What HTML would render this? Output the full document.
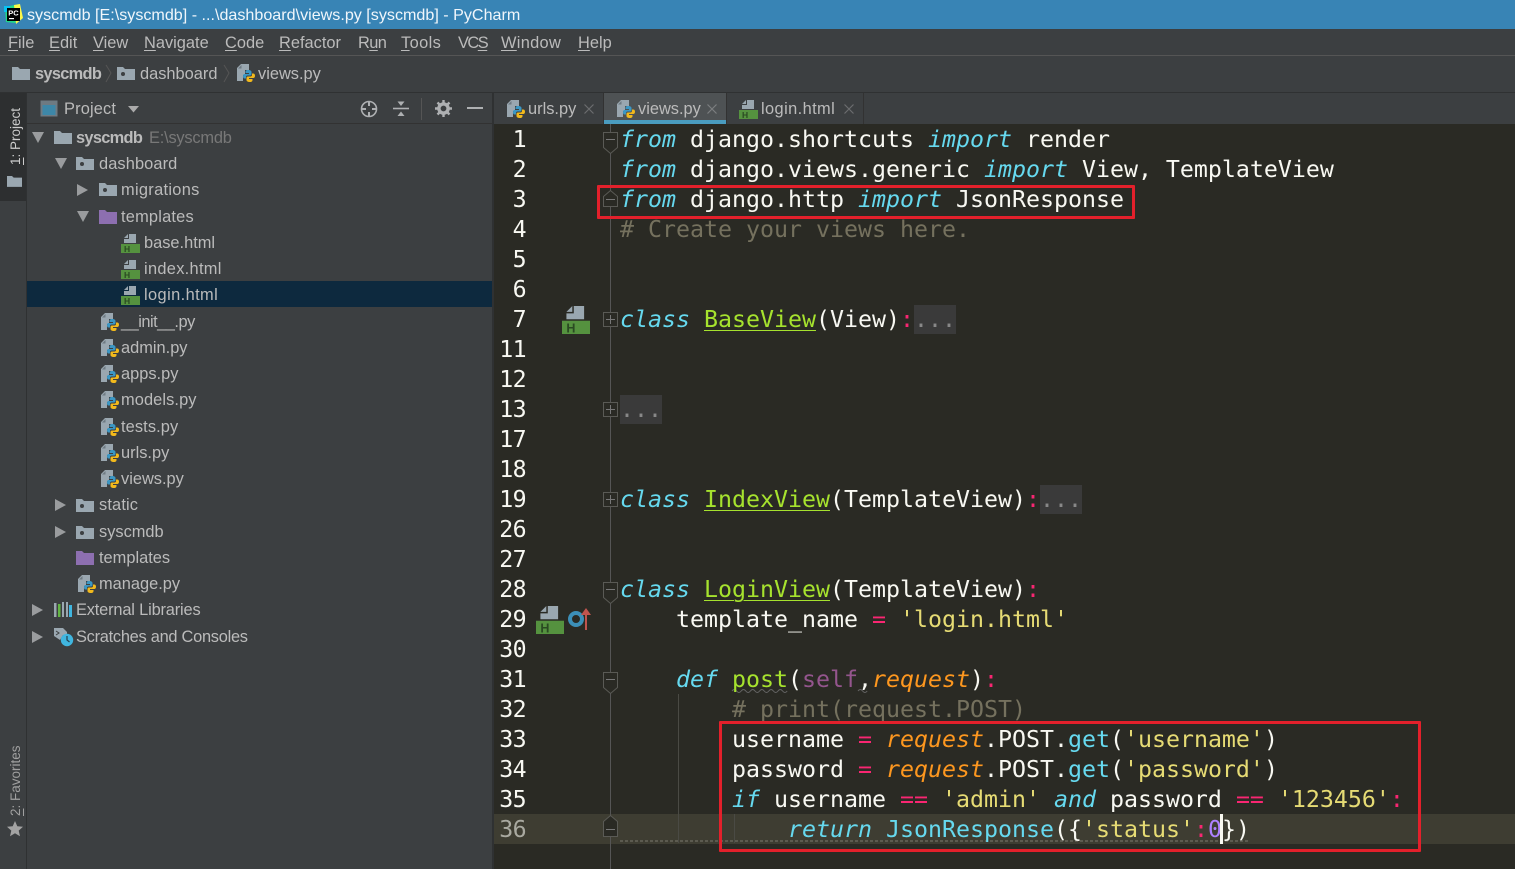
<!DOCTYPE html>
<html><head><meta charset="utf-8"><title>PyCharm</title>
<style>
html,body{margin:0;padding:0;width:1515px;height:869px;overflow:hidden;background:#3c3f41}
body{position:relative;font-family:"Liberation Sans",sans-serif;color:#bbb;font-size:16.4px}
.a{position:absolute}
.t{position:absolute;white-space:pre;line-height:20px;height:20px}
.m u{text-underline-offset:2px}
#code,#nums{position:absolute;margin:0;font-family:"DejaVu Sans Mono","Liberation Mono",monospace;font-size:23.25px;line-height:30px;color:#f8f8f2;white-space:pre}
#code{left:620px;top:125px}
#nums{left:495px;top:125px;width:31px;text-align:right;letter-spacing:-.6px}
i{font-style:italic}
.k{color:#66d9ef;font-style:italic}.s{color:#e6db74}.o{color:#f92672}.c{color:#a6e22e;text-decoration:underline;text-decoration-thickness:1px;text-underline-offset:3px}
.f{color:#a6e22e}.b{color:#66d9ef}.g{color:#75715e}.r{color:#fd971f;font-style:italic}.e{color:#94558d}.n{color:#ae81ff}
.ph{position:absolute;width:42px;height:29px;background:#3a3a3a;color:#888;font:23.25px/30px "DejaVu Sans Mono",monospace;white-space:pre}
.box{position:absolute;border:3px solid #e3202b;box-sizing:border-box;border-radius:1px}
svg{position:absolute;overflow:visible}
</style></head><body>
<svg width="0" height="0" style="position:absolute">
<defs>
<symbol id="py" viewBox="0 0 18 18" overflow="visible"><path d="M4 0h8v6H8v5H6v6H0V4z" fill="#9aa7b0"/><path d="M1 4.500h3.500V1z" fill="#6e7a82"/>
<path id="pyb" d="M11 6C9 6 8.500 7 8.500 8V9H12V10H7.500C6.500 10 6 11 6 12.200S6.500 14.500 7.500 14.500H9V13C9 12 9.800 11.500 10.500 11.500H13C14 11.500 14.500 11 14.500 10V8C14.500 7 13.500 6 11 6z" fill="#3b97c4"/>
<path d="M11 6C9 6 8.500 7 8.500 8V9H12V10H7.500C6.500 10 6 11 6 12.200S6.500 14.500 7.500 14.500H9V13C9 12 9.800 11.500 10.500 11.500H13C14 11.500 14.500 11 14.500 10V8C14.500 7 13.500 6 11 6z" fill="#f2b91c" transform="rotate(180 12 12)"/></symbol>
<symbol id="ht" viewBox="0 0 19 19" overflow="visible"><path d="M8 0h7v9H3V5h5z" fill="#9aa7b0"/><path d="M3 4L7 0V4z" fill="#9aa7b0"/><rect x="0" y="10" width="19" height="9" fill="#55923f"/><text x="3" y="18" font-family="Liberation Sans" font-size="8.500" font-weight="bold" fill="#2a4a22">H</text></symbol>
<symbol id="fo" viewBox="0 0 18 14" overflow="visible"><path d="M0 1h6l2 2h10v11H0z" fill="#9aa7b0"/></symbol>
<symbol id="pk" viewBox="0 0 18 14" overflow="visible"><path d="M0 1h6l2 2h10v11H0z" fill="#9aa7b0"/><circle cx="6" cy="8" r="2" fill="#3c3f41"/></symbol>
<symbol id="pu" viewBox="0 0 18 14" overflow="visible"><path d="M0 0h6l2 2h10v12H0z" fill="#8d6fb0"/></symbol>
</defs></svg>

<!-- title -->
<div class="a" style="left:0;top:0;width:1515px;height:29px;background:#3884b5"></div>
<svg style="left:3px;top:4px" width="20" height="20"><path d="M2 3L16 0l3 13-7 6-9-1z" fill="#21d789"/><path d="M11 1l6-1 3 14-7 6z" fill="#fcf84a"/><path d="M1 2h6v6H1z" fill="#07c3f2"/><rect x="4" y="4" width="13" height="13" fill="#000"/><rect x="6" y="14" width="5" height="1.200" fill="#fff"/><text x="5.200" y="11.500" font-family="Liberation Sans" font-weight="bold" font-size="7.500" fill="#fff">PC</text></svg>
<div class="t" style="left:27px;top:5px;color:#f0f6fb;font-size:16.120px">syscmdb [E:\syscmdb] - ...\dashboard\views.py [syscmdb] - PyCharm</div>

<!-- menu -->
<div class="a" style="left:0;top:55px;width:1515px;height:1px;background:#555"></div>
<div class="m">
<div class="t" style="left:8px;top:33px"><u>F</u>ile</div>
<div class="t" style="left:49px;top:33px"><u>E</u>dit</div>
<div class="t" style="left:93px;top:33px"><u>V</u>iew</div>
<div class="t" style="left:144px;top:33px"><u>N</u>avigate</div>
<div class="t" style="left:225px;top:33px"><u>C</u>ode</div>
<div class="t" style="left:279px;top:33px"><u>R</u>efactor</div>
<div class="t" style="left:358px;top:33px;letter-spacing:-.6px">R<u>u</u>n</div>
<div class="t" style="left:401px;top:33px;letter-spacing:.4px"><u>T</u>ools</div>
<div class="t" style="left:458px;top:33px;letter-spacing:-1.5px">VC<u>S</u></div>
<div class="t" style="left:501px;top:33px;letter-spacing:.3px"><u>W</u>indow</div>
<div class="t" style="left:578px;top:33px"><u>H</u>elp</div>
</div>

<!-- breadcrumb -->
<svg style="left:12px;top:66px" width="18" height="14"><use href="#fo" width="18" height="14"/></svg>
<div class="t" style="left:35px;top:64px;font-weight:bold;letter-spacing:-.7px">syscmdb</div>
<svg style="left:105px;top:64px" width="8" height="20"><path d="M1 1l5 8-5 9" fill="none" stroke="#555"/></svg>
<svg style="left:117px;top:66px" width="18" height="14"><use href="#pk" width="18" height="14"/></svg>
<div class="t" style="left:140px;top:64px">dashboard</div>
<svg style="left:223px;top:64px" width="8" height="20"><path d="M1 1l5 8-5 9" fill="none" stroke="#555"/></svg>
<svg style="left:237px;top:64px" width="18" height="18"><use href="#py" width="18" height="18"/></svg>
<div class="t" style="left:258px;top:64px">views.py</div>

<div class="a" style="left:0;top:92px;width:1515px;height:1px;background:#2f3132"></div>

<!-- left strip -->
<div class="a" style="left:0;top:93px;width:26px;height:108px;background:#2d2f30"></div>
<div class="a" style="left:26px;top:93px;width:1px;height:776px;background:#2f3132"></div>
<div class="a" style="left:7px;top:105px;width:18px;height:60px;writing-mode:vertical-rl;transform:rotate(180deg);font-size:13.500px;line-height:18px;white-space:pre;color:#ccc"><u>1</u>: Project</div>
<svg style="left:7px;top:175px" width="15" height="12"><use href="#fo" width="15" height="12"/></svg>
<div class="a" style="left:7px;top:744px;width:18px;height:72px;writing-mode:vertical-rl;transform:rotate(180deg);font-size:13.500px;line-height:18px;white-space:pre;color:#a0a0a0"><u>2</u>: Favorites</div>
<svg style="left:7px;top:821px" width="16" height="16"><path d="M8 0l2.300 5.300 5.700.500-4.300 3.800 1.300 5.600L8 12.300 3 15.200l1.300-5.600L0 5.800l5.700-.500z" fill="#a3a3a3"/></svg>

<!-- project header -->
<svg style="left:40px;top:100px" width="18" height="17"><rect x=".5" y=".5" width="17" height="16" fill="#6e7a82"/><rect x="2.500" y="5" width="13" height="10" fill="#3d87a8"/></svg>
<div class="t" style="left:64px;top:99px;letter-spacing:.15px">Project</div>
<svg style="left:128px;top:106px" width="11" height="7"><path d="M0 0h11L5.500 6.500z" fill="#aaa"/></svg>
<svg style="left:360px;top:100px" width="18" height="18"><circle cx="9" cy="9" r="7.500" fill="none" stroke="#aeb0b2" stroke-width="1.600"/><path d="M9 1v5M9 12v5M1 9h5M12 9h5" stroke="#aeb0b2" stroke-width="2"/></svg>
<svg style="left:393px;top:100px" width="16" height="18"><path d="M0 8.500h16" stroke="#aeb0b2" stroke-width="1.600"/><path d="M4.500 1.500h7L8 6zM4.500 16h7L8 11.500z" fill="#aeb0b2"/></svg>
<div class="a" style="left:421px;top:98px;width:1px;height:22px;background:#555"></div>
<svg style="left:435px;top:100px" width="17" height="17"><circle cx="8.500" cy="8.500" r="4.600" fill="none" stroke="#aeb0b2" stroke-width="3.400"/><path d="M8.500 0v17M0 8.500h17M2.500 2.500l12 12M14.500 2.500l-12 12" stroke="#aeb0b2" stroke-width="2.400" stroke-dasharray="3 11 3 0"/></svg>
<div class="a" style="left:467px;top:107px;width:16px;height:2px;background:#aeb0b2"></div>
<div class="a" style="left:27px;top:123px;width:465px;height:1px;background:#323232"></div>

<!-- tree -->
<div class="a" style="left:27px;top:281px;width:465px;height:26px;background:#0d293e"></div>
<svg style="left:0;top:0" width="500" height="660">
<g fill="#9a9c9e">
<path d="M32 132h12l-6 11z"/><path d="M55 158h12l-6 11z"/><path d="M77 184l11 6-11 6z"/><path d="M77 211h12l-6 11z"/>
<path d="M55 499l11 6-11 6z"/><path d="M55 526l11 6-11 6z"/><path d="M32 604l11 6-11 6z"/><path d="M32 631l11 6-11 6z"/>
</g>
<use href="#fo" x="54" y="130" width="18" height="14"/>
<use href="#pk" x="76" y="156" width="18" height="14"/>
<use href="#pk" x="99" y="182" width="18" height="14"/>
<use href="#pu" x="99" y="210" width="18" height="14"/>
<use href="#ht" x="121" y="234" width="19" height="19"/>
<use href="#ht" x="121" y="260" width="19" height="19"/>
<use href="#ht" x="121" y="286" width="19" height="19"/>
<use href="#py" x="101" y="313" width="18" height="18"/>
<use href="#py" x="101" y="339" width="18" height="18"/>
<use href="#py" x="101" y="365" width="18" height="18"/>
<use href="#py" x="101" y="391" width="18" height="18"/>
<use href="#py" x="101" y="418" width="18" height="18"/>
<use href="#py" x="101" y="444" width="18" height="18"/>
<use href="#py" x="101" y="470" width="18" height="18"/>
<use href="#pk" x="76" y="498" width="18" height="14"/>
<use href="#pk" x="76" y="525" width="18" height="14"/>
<use href="#pu" x="76" y="551" width="18" height="14"/>
<use href="#py" x="78" y="575" width="18" height="18"/>
<g fill="#9aa7b0"><rect x="54" y="603" width="2.500" height="14"/><rect x="66" y="602" width="2" height="15"/></g>
<rect x="58" y="604" width="2.500" height="13" fill="#62b543"/><rect x="62" y="602" width="2" height="15" fill="#9aa7b0"/><rect x="69" y="605" width="3" height="12" fill="#40b6e0"/>
<path d="M54 628h9l4 4v3h-4l-3 5-6-4z" fill="#9aa7b0"/><path d="M56 631l3 2-3 2" stroke="#3c3f41" fill="none"/>
<circle cx="67" cy="640" r="6.200" fill="#40b6e0"/><path d="M67 636v4l2.500 2" stroke="#23404f" fill="none" stroke-width="1.200"/>
</svg>
<div class="t" style="left:76px;top:128px;font-weight:bold;letter-spacing:-.7px">syscmdb</div>
<div class="t" style="left:149px;top:128px;color:#787878;letter-spacing:-.2px">E:\syscmdb</div>
<div class="t" style="left:99px;top:154px;letter-spacing:.1px">dashboard</div>
<div class="t" style="left:121px;top:180px;letter-spacing:.3px">migrations</div>
<div class="t" style="left:121px;top:207px;letter-spacing:.2px">templates</div>
<div class="t" style="left:144px;top:233px">base.html</div>
<div class="t" style="left:144px;top:259px;letter-spacing:.3px">index.html</div>
<div class="t" style="left:144px;top:285px;letter-spacing:.4px">login.html</div>
<div class="t" style="left:121px;top:312px;letter-spacing:-.5px">__init__.py</div>
<div class="t" style="left:121px;top:338px">admin.py</div>
<div class="t" style="left:121px;top:364px">apps.py</div>
<div class="t" style="left:121px;top:390px;letter-spacing:.1px">models.py</div>
<div class="t" style="left:121px;top:417px;letter-spacing:.1px">tests.py</div>
<div class="t" style="left:121px;top:443px">urls.py</div>
<div class="t" style="left:121px;top:469px">views.py</div>
<div class="t" style="left:99px;top:495px;letter-spacing:.15px">static</div>
<div class="t" style="left:99px;top:522px">syscmdb</div>
<div class="t" style="left:99px;top:548px">templates</div>
<div class="t" style="left:99px;top:574px">manage.py</div>
<div class="t" style="left:76px;top:600px;letter-spacing:-.17px">External Libraries</div>
<div class="t" style="left:76px;top:627px;letter-spacing:-.27px">Scratches and Consoles</div>

<!-- divider -->
<div class="a" style="left:492px;top:93px;width:2px;height:776px;background:#2f3132"></div>

<!-- tabs -->
<div class="a" style="left:604px;top:93px;width:122px;height:31px;background:#4e5254"></div>
<div class="a" style="left:604px;top:120px;width:122px;height:4px;background:#4a9cbf"></div>
<div class="a" style="left:603px;top:93px;width:1px;height:31px;background:#323232"></div>
<div class="a" style="left:726px;top:93px;width:1px;height:31px;background:#323232"></div>
<div class="a" style="left:863px;top:93px;width:1px;height:31px;background:#323232"></div>
<svg style="left:507px;top:100px" width="18" height="18"><use href="#py" width="18" height="18"/></svg>
<div class="t" style="left:528px;top:99px">urls.py</div>
<svg style="left:584px;top:104px" width="10" height="10"><path d="M.5.5l9 9M9.500.5l-9 9" stroke="#6b6d6f" stroke-width="1.200"/></svg>
<svg style="left:617px;top:100px" width="18" height="18"><use href="#py" width="18" height="18"/></svg>
<div class="t" style="left:638px;top:99px">views.py</div>
<svg style="left:707px;top:104px" width="10" height="10"><path d="M.5.5l9 9M9.500.5l-9 9" stroke="#7c7e80" stroke-width="1.200"/></svg>
<svg style="left:739px;top:100px" width="19" height="19"><use href="#ht" width="19" height="19"/></svg>
<div class="t" style="left:761px;top:99px;letter-spacing:.4px">login.html</div>
<svg style="left:844px;top:104px" width="10" height="10"><path d="M.5.5l9 9M9.500.5l-9 9" stroke="#6b6d6f" stroke-width="1.200"/></svg>

<!-- editor -->
<div class="a" style="left:494px;top:124px;width:1021px;height:745px;background:#2a2a24"></div>
<div class="a" style="left:494px;top:814px;width:1021px;height:30px;background:#3e3d32"></div>
<div class="ph" style="left:914px;top:305px">...</div>
<div class="ph" style="left:620px;top:395px">...</div>
<div class="ph" style="left:1040px;top:485px">...</div>

<svg style="left:0;top:0" width="1515" height="869">
<path d="M610.500 124V869" stroke="#555" fill="none"/>
<path d="M678.500 694V843M734.500 814V843" stroke="#4a4a44" fill="none"/>
<g fill="#2a2a24" stroke="#5a5a55">
<path d="M603.500 132.500h14v15l-7 6-7-6z"/>
<path d="M603.500 206.500h14v-10l-7-6-7 6z" transform="translate(0 0)"/>
<rect x="603.500" y="312.500" width="14" height="14"/>
<rect x="603.500" y="402.500" width="14" height="14"/>
<rect x="603.500" y="492.500" width="14" height="14"/>
<path d="M603.500 582.500h14v15l-7 6-7-6z"/>
<path d="M603.500 672.500h14v15l-7 6-7-6z"/>
<path d="M603.500 836.500h14v-15l-7-6-7 6z"/>
</g>
<path d="M606 139.500h9M606 199.500h9M606 319.500h9M610.500 315v9M606 409.500h9M610.500 405v9M606 499.500h9M610.500 495v9M606 589.500h9M606 679.500h9M606 829.500h9" stroke="#777"/>
<use href="#ht" x="562" y="306" width="28" height="28"/>
<use href="#ht" x="536" y="606" width="28" height="28"/>
<circle cx="576" cy="619" r="6" fill="none" stroke="#3c8fb8" stroke-width="4"/>
<path d="M586 630v-20" stroke="#c0544e" stroke-width="2"/><path d="M581 615l5-7 5 7z" fill="#c0544e"/>
<path d="M732 691q2.300-3 4.600 0t4.600 0 4.600 0 4.600 0 4.600 0 4.600 0 4.600 0 4.600 0 4.600 0 4.600 0 4.600 0 4.600 0M858 691q2.300-3 4.600 0t4.600 0" stroke="#666" fill="none" stroke-width="1"/>
<path d="M620 841h630" stroke="#5c5b50" stroke-width="2" stroke-dasharray="3 2" fill="none"/>
</svg>

<pre id="nums">1
2
3
4
5
6
7
11
12
13
17
18
19
26
27
28
29
30
31
32
33
34
35
<span style="color:#a9a9a0">36</span></pre>

<pre id="code"><span class="k">from</span> django.shortcuts <span class="k">import</span> render
<span class="k">from</span> django.views.generic <span class="k">import</span> View, TemplateView
<span class="k">from</span> django.http <span class="k">import</span> JsonResponse
<span class="g"># Create your views here.</span>


<span class="k">class</span> <span class="c">BaseView</span>(View)<span class="o">:</span>





<span class="k">class</span> <span class="c">IndexView</span>(TemplateView)<span class="o">:</span>


<span class="k">class</span> <span class="c">LoginView</span>(TemplateView)<span class="o">:</span>
    template_name <span class="o">=</span> <span class="s">'login.html'</span>

    <span class="k">def</span> <span class="f">post</span>(<span class="e">self</span>,<span class="r">request</span>)<span class="o">:</span>
        <span class="g"># print(request.POST)</span>
        username <span class="o">=</span> <span class="r">request</span>.POST.<span class="b">get</span>(<span class="s">'username'</span>)
        password <span class="o">=</span> <span class="r">request</span>.POST.<span class="b">get</span>(<span class="s">'password'</span>)
        <span class="k">if</span> username <span class="o">==</span> <span class="s">'admin'</span> <span class="k">and</span> password <span class="o">==</span> <span class="s">'123456'</span><span class="o">:</span>
            <span class="k">return</span> <span class="b">JsonResponse</span>({<span class="s">'status'</span><span class="o">:</span><span class="n">0</span>})</pre>

<div class="a" style="left:1220px;top:814px;width:3px;height:30px;background:#f8f8f0"></div>

<div class="box" style="left:597px;top:185px;width:538px;height:34px"></div>
<div class="box" style="left:719px;top:721px;width:702px;height:131px"></div>
</body></html>
